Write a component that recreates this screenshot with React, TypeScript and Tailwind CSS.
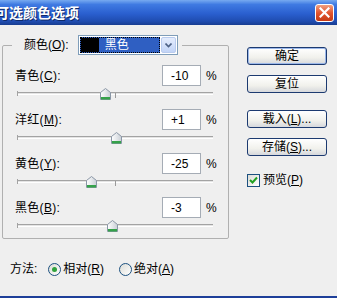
import React from "react";

interface SliderRow {
  label: string;
  key: string;
  value: number;
}

const rows: SliderRow[] = [
  { label: "青色", key: "C", value: -10 },
  { label: "洋红", key: "M", value: 1 },
  { label: "黄色", key: "Y", value: -25 },
  { label: "黑色", key: "B", value: -3 },
];

const fmt = (v: number) => (v > 0 ? `+${v}` : `${v}`);

const Thumb = () => (
  <svg width="11" height="12" viewBox="0 0 11 12">
    <defs>
      <linearGradient id="tg" x1="0" y1="0" x2="1" y2="0">
        <stop offset="0" stopColor="#ffffff" />
        <stop offset="1" stopColor="#c9cfd6" />
      </linearGradient>
    </defs>
    <path d="M5.5 0.5 L10.5 4.5 L10.5 11.5 L0.5 11.5 L0.5 4.5 Z" fill="url(#tg)" stroke="#8a97a6" />
    <rect x="1" y="9" width="9" height="2.5" fill="#35a24a" />
  </svg>
);

const Slider = ({ value }: { value: number }) => {
  const left = ((value + 100) / 200) * 196 - 5;
  return (
    <div className="relative ml-[14px] h-[13px] w-[196px]">
      <div className="absolute left-0 top-[6px] h-[3px] w-full border-t border-b border-t-[#a3a3a3] border-b-white bg-[#e4e4e4]" />
      <div className="absolute left-0 top-[5px] h-[5px] w-px bg-[#a3a3a3]" />
      <div className="absolute left-[98px] top-[7px] h-[5px] w-px bg-[#9a9a9a]" />
      <div className="absolute top-[2px]" style={{ left }}>
        <Thumb />
      </div>
    </div>
  );
};

const XpButton = ({ children, focused }: { children: React.ReactNode; focused?: boolean }) => (
  <div
    className={
      focused
        ? "flex h-[18px] w-[80px] items-center justify-center rounded-[3px] border border-[#1c3a70] bg-[linear-gradient(to_bottom,#ffffff,#f1f1ec_60%,#d6d8dc)] shadow-[inset_0_0_0_1px_#9cb8ea] text-[12px]"
        : "flex h-[18px] w-[80px] items-center justify-center rounded-[3px] border border-[#1c3a70] bg-[linear-gradient(to_bottom,#ffffff,#f1f1ec_60%,#d6d8dc)] text-[12px]"
    }
  >
    {children}
  </div>
);

const Radio = ({ checked }: { checked?: boolean }) => (
  <div className="flex h-[13px] w-[13px] items-center justify-center rounded-full border border-[#1c5180] bg-[linear-gradient(135deg,#dcdcd6,#ffffff)]">
    {checked && <div className="h-[5px] w-[5px] rounded-full bg-[#2fa23c]" />}
  </div>
);

export default function App() {
  return (
    <div className="flex h-[298px] w-[337px] flex-col overflow-hidden bg-[#efefef] font-['Liberation_Sans','Noto_Sans_CJK_SC',sans-serif] text-black">
      {/* title bar */}
      <div className="flex h-[25px] shrink-0 items-center justify-between bg-[linear-gradient(to_bottom,#77aaf0_0%,#3f7ae2_18%,#2a5fcf_55%,#1f4cb0_85%,#183d90_100%)]">
        <span className="ml-[-5px] text-[14px] font-bold leading-none text-white [text-shadow:1px_1px_0_#0f2a6a]">
          可选颜色选项
        </span>
        <div className="mr-[3px] flex h-[18px] w-[19px] items-center justify-center rounded-[3px] border border-white bg-[linear-gradient(to_bottom,#f0a080,#e2542e_50%,#c63a14)]">
          <svg width="11" height="11" viewBox="0 0 11 11">
            <path d="M1.5 1.5 L9.5 9.5 M9.5 1.5 L1.5 9.5" stroke="#ffffff" strokeWidth="2.2" strokeLinecap="square" />
          </svg>
        </div>
      </div>

      {/* body */}
      <div className="flex flex-1 flex-col">
        <div className="flex pt-[10px]">
          <fieldset className="ml-[2px] w-[227px] rounded-[2px] border border-[#b0b0b0] p-0 pb-[7px]">
            <legend className="ml-[9px] flex items-center pl-[12px] pr-[4px] text-[12px]">
              <span>
                颜色(<span className="underline">O</span>):
              </span>
              <div className="ml-[9px] flex h-[20px] w-[100px] border border-[#7f9db9] bg-white p-[1px]">
                <div className="flex flex-1 items-center border border-dotted border-black bg-[#2f5fc2]">
                  <div className="h-full w-[18px] bg-black" />
                  <span className="ml-[6px] text-white">黑色</span>
                </div>
                <div className="ml-[1px] flex w-[15px] items-center justify-center rounded-[2px] border border-[#b9cbee] bg-[linear-gradient(to_bottom,#e4ecfd,#c2d4f7)]">
                  <svg width="7" height="5" viewBox="0 0 7 5">
                    <path d="M0.5 0.5 L3.5 3.5 L6.5 0.5" fill="none" stroke="#4d6185" strokeWidth="1.6" />
                  </svg>
                </div>
              </div>
            </legend>
            <div className="mt-[10px] flex flex-col gap-[10px]">
              {rows.map((r) => (
                <div key={r.key} className="flex flex-col">
                  <div className="flex h-[21px] items-center pl-[12px] text-[12px]">
                    <span className="w-[147px] tracking-[0.3px]">
                      {r.label}(<span className="underline">{r.key}</span>):
                    </span>
                    <div className="flex h-[21px] w-[39px] items-center border border-[#a5acb5] bg-white pl-[8px]">
                      {fmt(r.value)}
                    </div>
                    <span className="ml-[5px]">%</span>
                  </div>
                  <Slider value={r.value} />
                </div>
              ))}
            </div>
          </fieldset>

          <div className="ml-[18px] flex flex-col pt-[12px]">
            <XpButton focused>确定</XpButton>
            <div className="mt-[10px]">
              <XpButton>复位</XpButton>
            </div>
            <div className="mt-[17px]">
              <XpButton>
                载入(<span className="underline">L</span>)...
              </XpButton>
            </div>
            <div className="mt-[10px]">
              <XpButton>
                存储(<span className="underline">S</span>)...
              </XpButton>
            </div>
            <div className="mt-[15px] flex items-center text-[12px]">
              <div className="flex h-[13px] w-[13px] items-center justify-center border border-[#1c5180] bg-[linear-gradient(135deg,#dcdcd6,#ffffff)]">
                <svg width="9" height="8" viewBox="0 0 9 8">
                  <path d="M1 4 L3.5 6.5 L8 1.5" fill="none" stroke="#21a121" strokeWidth="2" />
                </svg>
              </div>
              <span className="ml-[3px]">
                预览(<span className="underline">P</span>)
              </span>
            </div>
          </div>
        </div>

        <div className="mt-[22px] flex h-[16px] items-center pl-[10px] text-[12px]">
          <span>方法:</span>
          <div className="ml-[11px]">
            <Radio checked />
          </div>
          <span className="ml-[2px]">
            相对(<span className="underline">R</span>)
          </span>
          <div className="ml-[15px]">
            <Radio />
          </div>
          <span className="ml-[2px]">
            绝对(<span className="underline">A</span>)
          </span>
        </div>
        <div className="flex-1" />
        <div className="h-[2px] shrink-0 bg-[#1e3f99]" />
      </div>
    </div>
  );
}
